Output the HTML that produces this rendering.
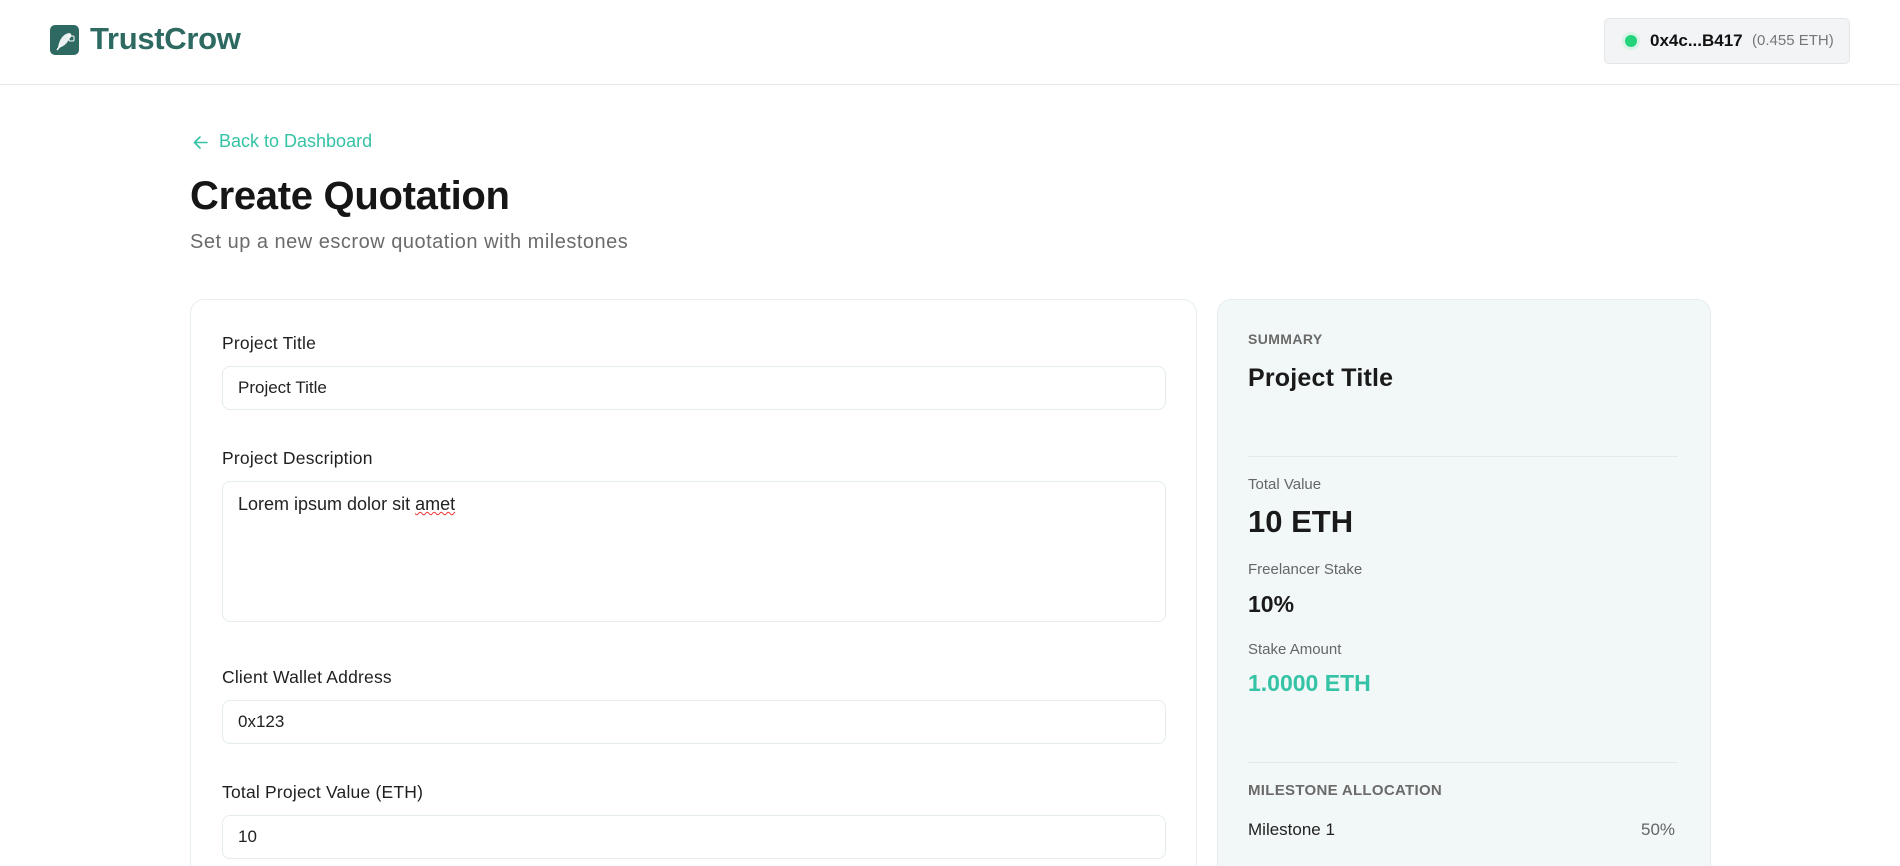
<!DOCTYPE html>
<html><head><meta charset="utf-8"><style>
*{box-sizing:border-box;margin:0;padding:0}
html,body{width:1900px;height:866px;overflow:hidden}
body{background:#fff;font-family:"Liberation Sans",sans-serif;color:#1a1a1a;position:relative}
.a{position:absolute;white-space:nowrap}
.hdr{position:absolute;left:0;top:0;width:1900px;height:85px;border-bottom:1px solid #e6e8ea}
.logo{left:50px;top:25px;width:29px;height:30px;background:#2e6a62;border-radius:5px}
.brand{left:90px;top:21px;font-size:31px;font-weight:bold;color:#2e6a62;letter-spacing:-0.3px}
.pill{left:1604px;top:18px;width:246px;height:46px;background:#f2f4f5;border:1px solid #e3e6e8;border-radius:5px}
.dot{left:1625px;top:35px;width:12px;height:12px;border-radius:50%;background:#22d37a;box-shadow:0 0 0 3px #d9f3e6}
.card{position:absolute;border:1px solid #e6eef0;border-bottom:none;border-radius:14px 14px 0 0}
.lbl{font-size:17.5px;color:#1f1f1f;left:222px;letter-spacing:.2px}
.inp{position:absolute;left:222px;width:944px;border:1px solid #e4ecee;border-radius:8px;background:#fff;font-size:17px;color:#222;padding-left:15px}
.sm{font-size:15px;color:#666;left:1248px}
</style></head><body>
<div class="hdr"></div>
<div class="a logo"><svg width="29" height="30" viewBox="0 0 29 30"><path d="M8 23 C9 15 13 9 19 8 C21 8 22 10 21 12 L19 14 C17 19 13 22 8 23 Z" fill="#fff" opacity=".9"/><path d="M7 25 L11 20" stroke="#fff" stroke-width="1.5"/><rect x="19" y="11" width="5" height="5" rx="1" fill="none" stroke="#fff" stroke-width="1"/></svg></div>
<div class="a brand">TrustCrow</div>
<div class="a pill"></div>
<div class="a dot"></div>
<div class="a" style="left:1650px;top:31px;font-size:17px;font-weight:bold;color:#111">0x4c...B417</div>
<div class="a" style="left:1752px;top:32px;font-size:15px;color:#777">(0.455 ETH)</div>

<svg class="a" style="left:192px;top:134px" width="17" height="17" viewBox="0 0 17 17"><path d="M15 8.5H2.5M8 3L2.5 8.5L8 14" fill="none" stroke="#34c3a5" stroke-width="1.6" stroke-linecap="round" stroke-linejoin="round"/></svg>
<div class="a" style="left:219px;top:131px;font-size:18px;color:#34c3a5">Back to Dashboard</div>
<div class="a" style="left:190px;top:174px;font-size:40px;font-weight:bold;color:#161616;letter-spacing:-0.3px">Create Quotation</div>
<div class="a" style="left:190px;top:231px;font-size:20px;letter-spacing:.5px;color:#6b6b6b">Set up a new escrow quotation with milestones</div>

<div class="card" style="left:190px;top:299px;width:1007px;height:567px;background:#fff"></div>
<div class="a lbl" style="top:333px">Project Title</div>
<div class="inp" style="top:366px;height:44px;line-height:42px">Project Title</div>
<div class="a lbl" style="top:448px">Project Description</div>
<div class="inp" style="top:481px;height:141px;padding-top:12px;font-size:18px">Lorem ipsum dolor sit <span style="text-decoration:underline wavy #e33;text-decoration-thickness:1px">amet</span></div>
<div class="a lbl" style="top:667px">Client Wallet Address</div>
<div class="inp" style="top:700px;height:44px;line-height:42px">0x123</div>
<div class="a lbl" style="top:782px">Total Project Value (ETH)</div>
<div class="inp" style="top:815px;height:44px;line-height:42px">10</div>

<div class="card" style="left:1217px;top:299px;width:494px;height:567px;background:#f2f7f7"></div>
<div class="a sm" style="top:331px;font-size:14px;font-weight:bold;color:#6a6a6a;letter-spacing:.4px">SUMMARY</div>
<div class="a" style="left:1248px;top:364px;font-size:25px;font-weight:bold;color:#1a1a1a;letter-spacing:.2px">Project Title</div>
<div class="a" style="left:1248px;top:456px;width:430px;border-top:1px solid #e3eaea"></div>
<div class="a sm" style="top:476px">Total Value</div>
<div class="a" style="left:1248px;top:504px;font-size:31px;font-weight:bold;color:#1a1a1a">10 ETH</div>
<div class="a sm" style="top:561px">Freelancer Stake</div>
<div class="a" style="left:1248px;top:591px;font-size:23px;font-weight:bold;color:#1a1a1a">10%</div>
<div class="a sm" style="top:641px">Stake Amount</div>
<div class="a" style="left:1248px;top:670px;font-size:23px;font-weight:bold;color:#34c3a5">1.0000 ETH</div>
<div class="a" style="left:1248px;top:762px;width:430px;border-top:1px solid #e3eaea"></div>
<div class="a sm" style="top:782px;font-size:15px;font-weight:bold;color:#6a6a6a;letter-spacing:.3px">MILESTONE ALLOCATION</div>
<div class="a" style="left:1248px;top:820px;font-size:17px;color:#222">Milestone 1</div>
<div class="a" style="left:1641px;top:820px;font-size:17px;color:#666">50%</div>
</body></html>
